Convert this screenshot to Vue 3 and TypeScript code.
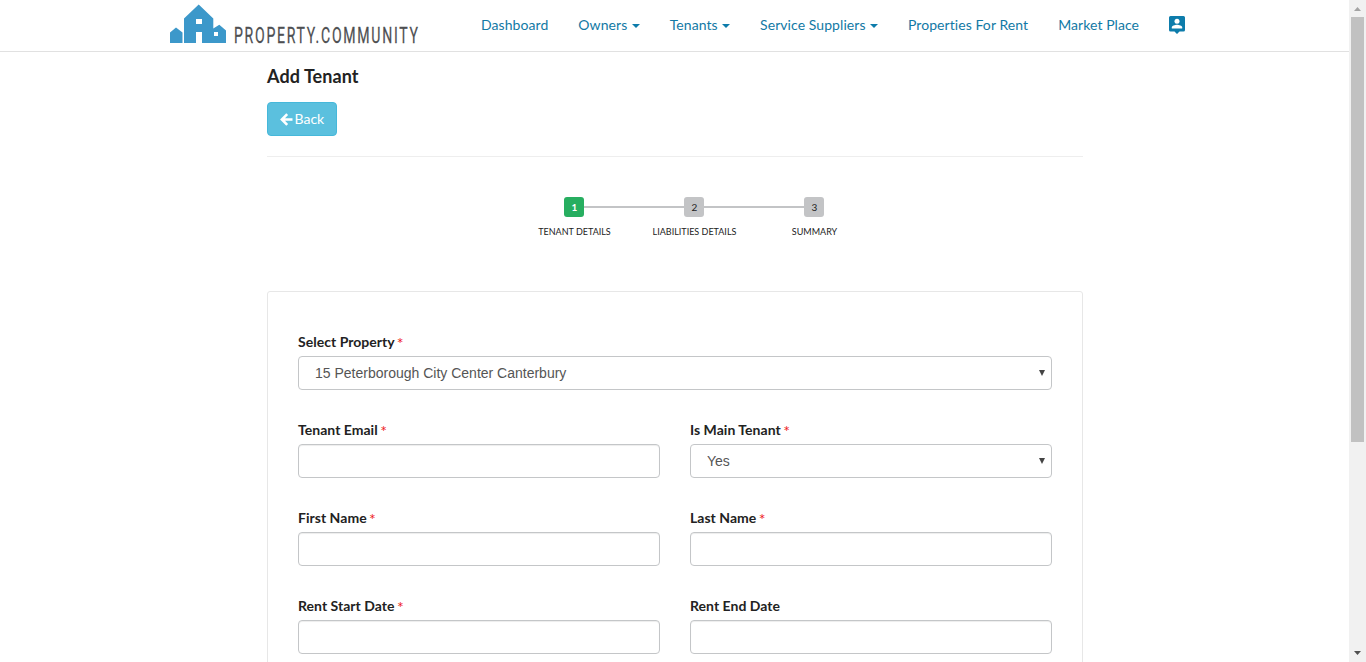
<script setup lang="ts">
interface NavItem { label: string; menu?: boolean }
interface Field { label: string; required?: boolean; options?: string[]; wide?: boolean }

const nav: NavItem[] = [
  { label: 'Dashboard' },
  { label: 'Owners', menu: true },
  { label: 'Tenants', menu: true },
  { label: 'Service Suppliers', menu: true },
  { label: 'Properties For Rent' },
  { label: 'Market Place' },
]
const steps: string[] = ['Tenant Details', 'Liabilities Details', 'Summary']
const fields: Field[] = [
  { label: 'Select Property', required: true, options: ['15 Peterborough City Center Canterbury'], wide: true },
  { label: 'Tenant Email', required: true },
  { label: 'Is Main Tenant', required: true, options: ['Yes'] },
  { label: 'First Name', required: true },
  { label: 'Last Name', required: true },
  { label: 'Rent Start Date', required: true },
  { label: 'Rent End Date' },
]
</script>

<template>
  <div class="window">
    <div class="page">
      <header class="topbar">
        <svg class="logo" width="256" height="51" viewBox="0 0 256 51">
          <path fill="#3c98ca" fill-rule="evenodd" d="M0 43V32.5L6 27.5L12.5 32.5V43ZM14 43V18.500L28.7 4.500L43.3 18.500V28.500L49.300 24.800L56 30.500V43H32V32H26V43ZM26 19V24H32V19ZM44 32V36H48V32Z" />
          <text class="logo-text" transform="translate(64 42.500) scale(.64 1)" textLength="287.500" lengthAdjust="spacing">PROPERTY.COMMUNITY</text>
        </svg>
        <nav class="nav">
          <a v-for="item in nav" :key="item.label" class="nav-link">{{ item.label }}<i v-if="item.menu" class="caret"></i></a>
          <a class="nav-link">
            <svg width="16" height="18" viewBox="0 0 16 18">
              <path fill="#0d7cab" d="M1.500 0H14.500Q16 0 16 1.500V14Q16 15.500 14.500 15.500H10.500L8 18L5.500 15.500H1.500Q0 15.500 0 14V1.500Q0 0 1.500 0Z" />
              <circle cx="8" cy="5.200" r="2.500" fill="#fff" />
              <path fill="#fff" d="M2.800 12.500V11.500C2.800 9.700 6 8.800 8 8.800S13.200 9.700 13.200 11.500V12.500Z" />
            </svg>
          </a>
        </nav>
      </header>
      <main class="content">
        <h1 class="title">Add Tenant</h1>
        <button class="back" type="button">
          <svg width="13" height="13" viewBox="0 0 13 13"><path d="M7.200 1.200L1.900 6.500L7.200 11.800M2.500 6.500H12.500" fill="none" stroke="#fff" stroke-width="2.600" /></svg>
          <span>Back</span>
        </button>
        <hr class="rule" />
        <ol class="steps">
          <li v-for="(step, i) in steps" :key="step" class="step" :class="{ active: i === 0 }">
            <span class="step-number">{{ i + 1 }}</span>
            <span class="step-label">{{ step }}</span>
          </li>
        </ol>
        <form class="panel">
          <label v-for="field in fields" :key="field.label" class="field" :class="{ wide: field.wide }">
            <span class="label">{{ field.label }} <b v-if="field.required" class="star">*</b></span>
            <span v-if="field.options" class="select-box">
              <select class="control select"><option v-for="o in field.options" :key="o">{{ o }}</option></select>
              <svg class="arrow" width="6" height="6" viewBox="0 0 6 6"><path d="M0 0H6L3 6Z" fill="#444" /></svg>
            </span>
            <input v-else class="control" type="text" />
          </label>
        </form>
      </main>
    </div>
    <aside class="scrollbar">
      <svg width="17" height="17" viewBox="0 0 17 17"><path d="M5 11L8.500 7L12 11Z" fill="#a3a3a3" /></svg>
      <div class="thumb"></div>
      <svg class="down" width="17" height="17" viewBox="0 0 17 17"><path d="M5 6L8.500 10L12 6Z" fill="#505050" /></svg>
    </aside>
  </div>
</template>

<style>
html, body { overflow: hidden; }
</style>

<style scoped>
* { box-sizing: border-box; }
.window { display: flex; height: 662px; overflow: hidden; background: #fff; color: #222; font: 14px/20px Lato, sans-serif; }
.page { width: 1349px; height: 662px; overflow: hidden; }
.topbar { display: flex; height: 52px; padding-left: 170px; border-bottom: 1px solid #e1e1e1; }
.logo { flex: none; margin-right: 55px; }
.logo-text { font-family: Roboto, sans-serif; font-size: 22px; fill: #4e4f52; stroke: #4e4f52; stroke-width: .25px; }
.nav { display: flex; gap: 30px; padding-top: 15px; white-space: nowrap; }
.nav-link { display: flex; align-items: center; height: 20px; color: #1279a5; font-size: 14px; letter-spacing: .07px; }
.caret { margin: 2px 0 0 4.400px; border: 4px solid transparent; border-top-color: #0d7cab; border-bottom: 0; }
.content { width: 816px; margin-left: 267px; }
.title { margin: 0; padding-top: 13px; font-size: 18px; line-height: 22px; font-weight: 700; letter-spacing: .08px; }
.back { display: flex; align-items: center; gap: 2px; width: 70px; height: 34px; margin-top: 15px; padding: 0 0 0 11.500px; border: 1px solid #46b8da; border-radius: 4px; background: #5bc0de; color: #fff; font: 14px/20px Lato, sans-serif; }
.rule { margin: 20px 0 0; border: 0; border-top: 1px solid #eee; }
.steps { display: grid; grid-template-columns: repeat(3, 120px); width: 360px; margin: 40px 0 0 247px; padding: 0; list-style: none; }
.step { display: flex; flex-direction: column; align-items: center; position: relative; font-size: 9px; text-transform: uppercase; }
.step + .step::before { content: ''; position: absolute; top: 9px; left: -50px; width: 100px; height: 2px; background: #c3c4c6; }
.step-number { width: 20px; height: 20px; padding-left: 1px; border-radius: 3px; background: #c3c4c6; font-size: 10px; line-height: 21px; text-align: center; }
.active .step-number { background: #27ae60; color: #fff; font-weight: 700; }
.step-label { margin-top: 5px; padding-left: 1px; line-height: 19px; white-space: nowrap; }
.panel { display: grid; grid-template-columns: 362px 362px; column-gap: 30px; row-gap: 30px; height: 480px; align-content: start; margin-top: 50px; padding: 40px 30px; border: 1px solid #e7e7e7; border-radius: 3px; }
.field { display: block; height: 58px; }
.wide { grid-column: 1 / 3; }
.label { display: block; height: 24px; line-height: 19px; font-weight: 700; letter-spacing: .03px; white-space: nowrap; }
.star { margin-left: -1px; color: #ee1c25; font-size: 16px; line-height: 1; font-weight: 400; vertical-align: -2px; }
.control { display: block; width: 100%; height: 34px; padding: 6px 16px; border: 1px solid #c4c6c8; border-radius: 4px; background: #fff; box-shadow: inset 0 1px 1px rgba(0, 0, 0, .075); color: #555; font: 14px/20px "Liberation Sans", sans-serif; }
.select { appearance: none; box-shadow: none; }
.select-box { display: block; position: relative; }
.arrow { position: absolute; right: 7px; top: 14px; }
.scrollbar { display: flex; flex-direction: column; width: 17px; height: 662px; background: #f1f1f1; }
.thumb { width: 13px; height: 425px; margin-left: 2px; background: #c1c1c1; }
.down { margin-top: auto; }
</style>
